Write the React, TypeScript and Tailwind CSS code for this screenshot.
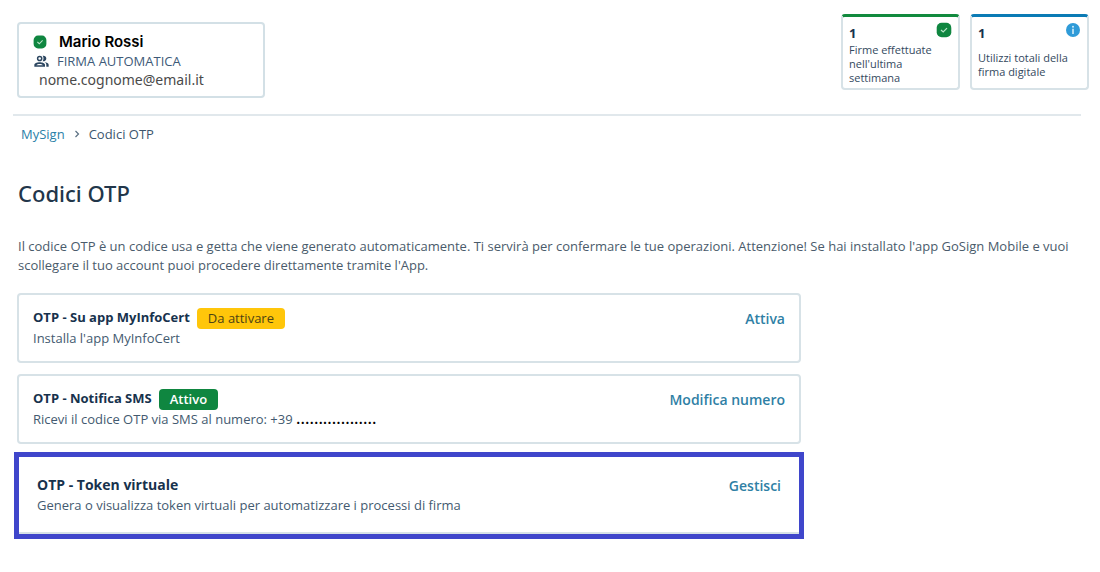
import type { ReactNode } from "react";

function CheckBadge({ className }: { className: string }) {
  return (
    <svg viewBox="0 0 16 16" className={className} aria-hidden="true">
      <rect x=".7" y=".7" width="14.6" height="14.6" rx="5" fill="#0f8640" />
      <path d="m5 8 2.200 2L11 6.200" fill="none" stroke="#b9e3c8" strokeWidth="1.200" />
    </svg>
  );
}

function InfoBadge() {
  return (
    <svg viewBox="0 0 16 16" className="size-4" aria-hidden="true">
      <circle cx="8" cy="8" r="7" fill="#2f9bd8" />
      <circle cx="8" cy="4.700" r="1" fill="#d3ecf9" />
      <path d="M8 6.800V12" stroke="#d3ecf9" strokeWidth="1.600" />
    </svg>
  );
}

function PeopleIcon() {
  return (
    <svg viewBox="0 0 24 24" className="size-4" fill="#2c4660" aria-hidden="true">
      <path d="M10 4a4.200 4.200 0 1 0 0 8.400A4.200 4.200 0 0 0 10 4Zm0 2.200a2 2 0 1 1 0 4 2 2 0 0 1 0-4Z" />
      <path d="M14.500 4.200a4.200 4.200 0 1 1 0 8c1.700-2.300 1.700-5.700 0-8Z" />
      <path d="M2 20.500v-2.700c0-2.800 4.600-4 8-4s8 1.200 8 4v2.700Zm3-2h10c-1-1.200-3-2-5-2s-4 .8-5 2Z" />
      <path d="M17.500 14c3 .5 6 1.700 6 3.800v2.700h-3.500v-2.700c0-1.600-1-2.800-2.500-3.800Z" />
    </svg>
  );
}

function StatCard({
  accent,
  value,
  icon,
  label,
  gap,
}: {
  accent: string;
  value: string;
  icon: ReactNode;
  label: string;
  gap: string;
}) {
  return (
    <div className={`h-19 w-[119px] rounded-[4px] border-x-2 border-t-3 border-b-2 border-x-[#d7e2e7] border-b-[#d7e2e7] px-1.5 pt-1 ${accent}`}>
      <div className="flex h-[22px] items-start justify-between">
        <span className="pt-1 text-[13px] leading-4 font-bold text-[#17324d]">{value}</span>
        <span className="pt-px">{icon}</span>
      </div>
      <p className={`text-[11px] leading-[14px] text-[#34495e] ${gap}`}>{label}</p>
    </div>
  );
}

function OtpRow({
  title,
  badge,
  action,
  titleClass = "text-[13px]",
  className,
  children,
}: {
  title: string;
  badge?: ReactNode;
  action: string;
  titleClass?: string;
  className: string;
  children: ReactNode;
}) {
  return (
    <li className={`flex items-start justify-between ${className}`}>
      <div>
        <div className="flex h-5 items-center gap-[7px]">
          <h2 className={`font-bold text-[#17324d] ${titleClass}`}>{title}</h2>
          {badge}
        </div>
        <p className="text-[13px] leading-5 text-[#435a70]">{children}</p>
      </div>
      <button type="button" className="text-sm leading-[22px] font-semibold text-[#2f7fa5]">
        {action}
      </button>
    </li>
  );
}

export default function App() {
  return (
    <main className="min-h-screen bg-white pr-[11px] pb-8 pl-[17px] font-['Open_Sans','Noto_Sans',sans-serif]">
      <header className="flex items-start justify-between pt-[14px]">
        <div className="mt-2 h-19 w-62 rounded-[4px] border-2 border-[#d3e0e6] pt-2 pl-[14px]">
          <div className="flex items-center gap-3">
            <CheckBadge className="size-[14px]" />
            <span className="font-['Inter',sans-serif] text-[15px] leading-5 font-semibold text-black">
              Mario Rossi
            </span>
          </div>
          <div className="flex items-center gap-2">
            <PeopleIcon />
            <span className="text-[13px] leading-[18px] text-[#3d5a78]">FIRMA AUTOMATICA</span>
          </div>
          <p className="pl-1.5 font-['Noto_Sans',sans-serif] text-sm leading-5 text-[#4a4a4a]">
            nome.cognome@email.it
          </p>
        </div>
        <div className="flex gap-2.5">
          <StatCard
            accent="border-t-[#128a3e]"
            value="1"
            icon={<CheckBadge className="size-4" />}
            label="Firme effettuate nell'ultima settimana"
            gap="mr-3"
          />
          <StatCard
            accent="border-t-[#0b7bb5]"
            value="1"
            icon={<InfoBadge />}
            label="Utilizzi totali della firma digitale"
            gap="mt-2"
          />
        </div>
      </header>

      <hr className="mt-4 mr-2 -ml-1 border-t-2 border-[#e1e8ec]" />

      <nav aria-label="Breadcrumb" className="mt-2 flex items-center pl-1 text-[13px] leading-5">
        <a href="#mysign" className="text-[#2b7fa8]">
          MySign
        </a>
        <svg viewBox="0 0 8 8" className="mx-2 size-2" aria-hidden="true">
          <path d="m2.500 1 3 3-3 3" fill="none" stroke="#5b7083" strokeWidth="1.200" />
        </svg>
        <span className="text-[#3d566e]">Codici OTP</span>
      </nav>

      <h1 className="mt-[33px] pl-px font-['Noto_Sans',sans-serif] text-[22px] leading-8 font-medium text-[#22364a]">
        Codici OTP
      </h1>

      <p className="mt-7 max-w-[1062px] pl-px text-[13px] leading-[19px] text-[#4a5b6b]">
        Il codice OTP è un codice usa e getta che viene generato automaticamente. Ti servirà per
        confermare le tue operazioni. Attenzione! Se hai installato l'app GoSign Mobile e vuoi
        scollegare il tuo account puoi procedere direttamente tramite l'App.
      </p>

      <ul className="mt-[18px] flex max-w-[784px] flex-col gap-[11px]">
        <OtpRow
          title="OTP - Su app MyInfoCert"
          action="Attiva"
          className="h-[70px] rounded-[4px] border-2 border-[#d7e2e7] px-[14px] pt-[13px]"
          badge={
            <span className="rounded-[4px] bg-[#ffc60a] px-[11px] text-[13px] leading-[21px] font-medium text-[#4d4213]">
              Da attivare
            </span>
          }
        >
          Installa l'app MyInfoCert
        </OtpRow>
        <OtpRow
          title="OTP - Notifica SMS"
          action="Modifica numero"
          className="h-[70px] rounded-[4px] border-2 border-[#d7e2e7] px-[14px] pt-[13px]"
          badge={
            <span className="rounded-[4px] bg-[#0f8640] px-[11px] text-[13px] leading-[21px] font-semibold text-white">
              Attivo
            </span>
          }
        >
          Ricevi il codice OTP via SMS al numero: +39{" "}
          <span className="font-['Inter',sans-serif] text-sm leading-none font-semibold text-black">..................</span>
        </OtpRow>
        <OtpRow
          title="OTP - Token virtuale"
          action="Gestisci"
          titleClass="text-sm"
          className="-mx-[3px] -mt-[3px] h-[87px] border-5 border-[#3f46cb] px-[18px] pt-[18px] shadow-[inset_0_-2px_0_#d7e2e7]"
        >
          Genera o visualizza token virtuali per automatizzare i processi di firma
        </OtpRow>
      </ul>
    </main>
  );
}
